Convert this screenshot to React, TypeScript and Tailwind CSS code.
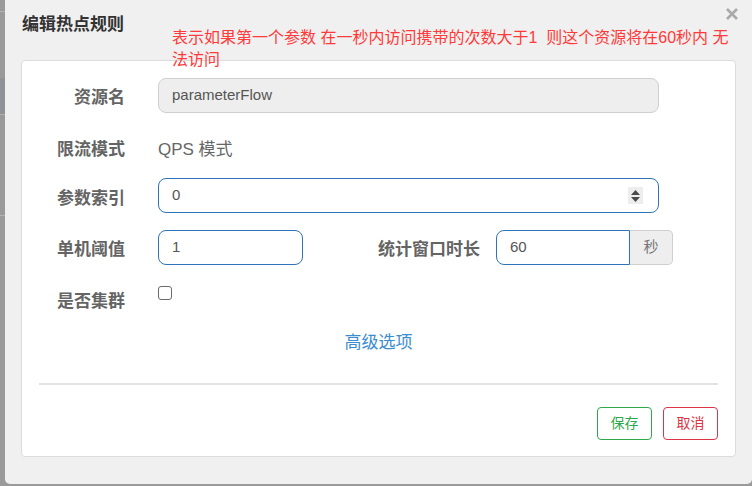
const font = "font-['Liberation_Sans','Noto_Sans_CJK_SC',sans-serif]";

const Label = ({ children, className = "" }: { children: React.ReactNode; className?: string }) => (
  <div className={`flex h-[35px] w-[103px] shrink-0 items-center justify-end overflow-hidden text-[17px] font-bold text-[#646464] ${className}`}>
    {children}
  </div>
);

export default function App() {
  return (
    <div className={`relative flex h-[486px] w-[752px] overflow-hidden bg-[#9a9a9a] ${font}`}>
      {/* backdrop page edge */}
      <div className="flex w-[5px] shrink-0 flex-col">
        <div className="mt-[11px] h-px bg-[#b4b4b4]" />
        <div className="mt-[66px] h-[37px] border-b border-[#b0b0b0] bg-[#8f9297]" />
        <div className="mt-[100px] h-px bg-[#b4b4b4]" />
      </div>

      <div className="relative h-[484px] w-[747px] shrink-0 rounded-b-[5px] bg-[#f0f0f0]">
        {/* header */}
        <div className="flex h-[60px] items-start justify-between pl-[17px] pr-[14px]">
          <h4 className="mt-[13px] flex h-[24px] items-center text-[17px] font-bold text-[#333]">编辑热点规则</h4>
          <button className="mt-[8px] text-[#a9a9a9]">
            <svg width="12" height="12" viewBox="0 0 12 12">
              <path d="M1 1 L11 11 M11 1 L1 11" stroke="currentColor" strokeWidth="2.6" />
            </svg>
          </button>
        </div>

        {/* note overlay */}
        <p className="absolute left-[167px] top-[27px] w-[566px] text-left text-[16px] leading-[22px] text-[#ff3a3a]">
          表示如果第一个参数 在一秒内访问携带的次数大于1{"\u00a0\u00a0"}则这个资源将在60秒内 无法访问
        </p>

        {/* body panel */}
        <div className="ml-[16px] h-[397px] w-[715px] rounded-[4px] border border-[#dcdcdc] bg-white pt-[17px]">
          {/* 资源名 */}
          <div className="flex h-[35px] items-start">
            <Label className="mt-[2px]">资源名</Label>
            <div className="ml-[33px] flex h-[35px] w-[501px] items-center rounded-[8px] border border-[#cfcfcf] bg-[#eeeeee] px-[13px] text-[15px] text-[#555]">
              parameterFlow
            </div>
          </div>

          {/* 限流模式 */}
          <div className="mt-[19px] flex h-[35px] items-start">
            <Label>限流模式</Label>
            <div className="ml-[33px] flex h-[35px] items-center text-[17px] text-[#666]">QPS 模式</div>
          </div>

          {/* 参数索引 */}
          <div className="mt-[11px] flex h-[35px] items-start">
            <Label className="mt-[3px]">参数索引</Label>
            <div className="ml-[33px] flex h-[35px] w-[501px] items-center justify-between rounded-[8px] border border-[#2f74b8] bg-white pl-[13px] pr-[15px] text-[15px] text-[#555]">
              <span>0</span>
              <span className="flex h-[17px] w-[15px] items-center justify-center bg-[#ededed]">
                <svg width="9" height="12" viewBox="0 0 9 12">
                  <path d="M4.5 0 L9 5 L0 5 Z M0 7 L9 7 L4.5 12 Z" fill="#4a4a4a" />
                </svg>
              </span>
            </div>
          </div>

          {/* 单机阈值 / 统计窗口时长 */}
          <div className="mt-[17px] flex h-[35px] items-start">
            <Label className="mt-[2px]">单机阈值</Label>
            <div className="ml-[33px] flex h-[35px] w-[145px] items-center rounded-[8px] border border-[#2f74b8] bg-white px-[13px] text-[15px] text-[#555]">
              1
            </div>
            <div className="ml-[75px] mt-[2px] flex h-[35px] items-center whitespace-nowrap text-[17px] font-bold text-[#646464]">统计窗口时长</div>
            <div className="ml-[16px] flex">
              <div className="flex h-[35px] w-[134px] items-center rounded-l-[8px] border border-[#2f74b8] bg-white px-[13px] text-[15px] text-[#555]">
                60
              </div>
              <div className="flex h-[35px] w-[43px] items-center justify-center rounded-r-[5px] border border-l-0 border-[#cfcfcf] bg-[#eeeeee] text-[15px] text-[#777]">
                秒
              </div>
            </div>
          </div>

          {/* 是否集群 */}
          <div className="mt-[21px] flex h-[35px] items-start">
            <Label className="-mt-[2px]">是否集群</Label>
            <div className="ml-[33px] h-[14px] w-[14px] rounded-[3px] border border-[#6b6b6b] bg-white" />
          </div>

          {/* 高级选项 */}
          <div className="mt-[11px] flex h-[22px] items-center justify-center text-[17px] text-[#3c8dd0]">
            高级选项
          </div>

          {/* footer */}
          <div className="mx-[17px] mt-[29px] h-[2px] bg-[#e3e3e3]" />
          <div className="mt-[22px] flex justify-end gap-[11px] pr-[17px]">
            <button className="h-[33px] w-[55px] rounded-[4px] border border-[#2ea84a] text-[14px] text-[#2ea84a]">保存</button>
            <button className="h-[33px] w-[55px] rounded-[4px] border border-[#dc3545] text-[14px] text-[#dc3545]">取消</button>
          </div>
        </div>
      </div>
    </div>
  );
}
